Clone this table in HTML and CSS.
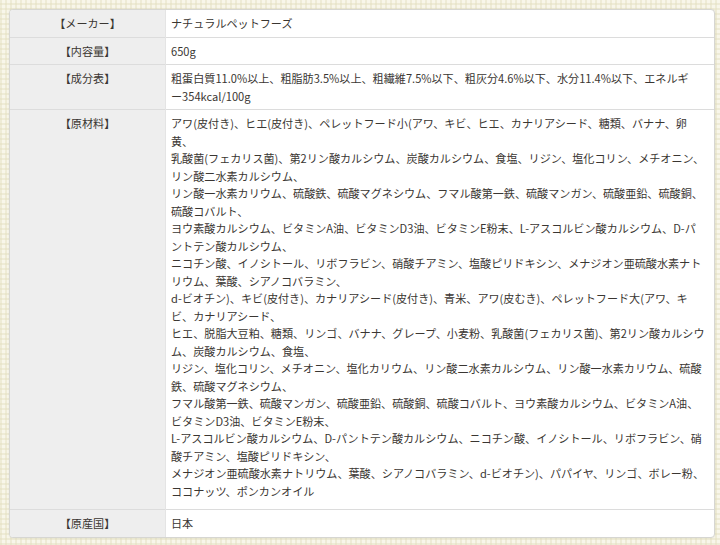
FILE: index.html
```html
<!DOCTYPE html>
<html lang="ja">
<head>
    <meta charset="UTF-8">
    <meta name="viewport" content="width=device-width, initial-scale=1.0">
    <title>商品詳細</title>
    <link rel="stylesheet" href="styles.css">
</head>
<body>

    <div class="spec-box">
        <table class="spec-table">
            <tr>
                <th>【メーカー】</th>
                <td>ナチュラルペットフーズ</td>
            </tr>
            <tr>
                <th>【内容量】</th>
                <td>650g</td>
            </tr>
            <tr>
                <th>【成分表】</th>
                <td class="lines">粗蛋白質11.0%以上、粗脂肪3.5%以上、粗繊維7.5%以下、粗灰分4.6%以下、水分11.4%以下、エネルギ<br>ー354kcal/100g</td>
            </tr>
            <tr>
                <th>【原材料】</th>
                <td class="lines materials">
                    アワ(皮付き)、ヒエ(皮付き)、ペレットフード小(アワ、キビ、ヒエ、カナリアシード、糖類、バナナ、卵<br>
                    黄、<br>
                    乳酸菌(フェカリス菌)、第2リン酸カルシウム、炭酸カルシウム、食塩、リジン、塩化コリン、メチオニン、<br>
                    リン酸二水素カルシウム、<br>
                    リン酸一水素カリウム、硫酸鉄、硫酸マグネシウム、フマル酸第一鉄、硫酸マンガン、硫酸亜鉛、硫酸銅、<br>
                    硫酸コバルト、<br>
                    ヨウ素酸カルシウム、ビタミンA油、ビタミンD3油、ビタミンE粉末、L-アスコルビン酸カルシウム、D-パ<br>
                    ントテン酸カルシウム、<br>
                    ニコチン酸、イノシトール、リボフラビン、硝酸チアミン、塩酸ピリドキシン、メナジオン亜硫酸水素ナト<br>
                    リウム、葉酸、シアノコバラミン、<br>
                    d-ビオチン)、キビ(皮付き)、カナリアシード(皮付き)、青米、アワ(皮むき)、ペレットフード大(アワ、キ<br>
                    ビ、カナリアシード、<br>
                    ヒエ、脱脂大豆粕、糖類、リンゴ、バナナ、グレープ、小麦粉、乳酸菌(フェカリス菌)、第2リン酸カルシウ<br>
                    ム、炭酸カルシウム、食塩、<br>
                    リジン、塩化コリン、メチオニン、塩化カリウム、リン酸二水素カルシウム、リン酸一水素カリウム、硫酸<br>
                    鉄、硫酸マグネシウム、<br>
                    フマル酸第一鉄、硫酸マンガン、硫酸亜鉛、硫酸銅、硫酸コバルト、ヨウ素酸カルシウム、ビタミンA油、<br>
                    ビタミンD3油、ビタミンE粉末、<br>
                    L-アスコルビン酸カルシウム、D-パントテン酸カルシウム、ニコチン酸、イノシトール、リボフラビン、硝<br>
                    酸チアミン、塩酸ピリドキシン、<br>
                    メナジオン亜硫酸水素ナトリウム、葉酸、シアノコバラミン、d-ビオチン)、パパイヤ、リンゴ、ボレー粉、<br>
                    ココナッツ、ポンカンオイル
                </td>
            </tr>
            <tr>
                <th>【原産国】</th>
                <td>日本</td>
            </tr>
        </table>
    </div>

</body>
</html>
```

FILE: styles.css
```css
body{
    margin: 0;
    padding: 9px 5px 7px 9px;
    background-color: #f8f6ea;
    background-image:
        repeating-linear-gradient(90deg, rgba(226, 222, 190, 0.45) 0 2px, transparent 2px 5px),
        repeating-linear-gradient(0deg, rgba(226, 222, 190, 0.45) 0 2px, transparent 2px 5px);
    font-family: "Noto Sans CJK JP", "Noto Sans", sans-serif;
    color: #3a3632;
}

.spec-box{
    background-color: #fff;
    border: 1px solid #d6d6d2;
    border-radius: 4px;
    box-shadow: 0 0 2px rgba(0, 0, 0, 0.08);
    overflow: hidden;
}

.spec-table{
    width: 100%;
    border-collapse: collapse;
    font-size: 11.1px;
    line-height: 17.5px;
}

.spec-table tr{
    border-bottom: 1px solid #dcdcdc;
}
.spec-table tr:last-child{
    border-bottom: none;
}

.spec-table th{
    width: 143px;
    padding: 5px 6px 4px;
    background-color: #eeeeee;
    font-weight: normal;
    text-align: center;
    vertical-align: top;
    border-right: 1px solid #e4e4e4;
}

.spec-table td{
    padding: 5px 6px 4px 5px;
    vertical-align: top;
}

/* line ends are fixed by hand, as in the original */
.spec-table .lines{
    white-space: nowrap;
}

.spec-table .materials{
    padding-bottom: 9px;
}
```
